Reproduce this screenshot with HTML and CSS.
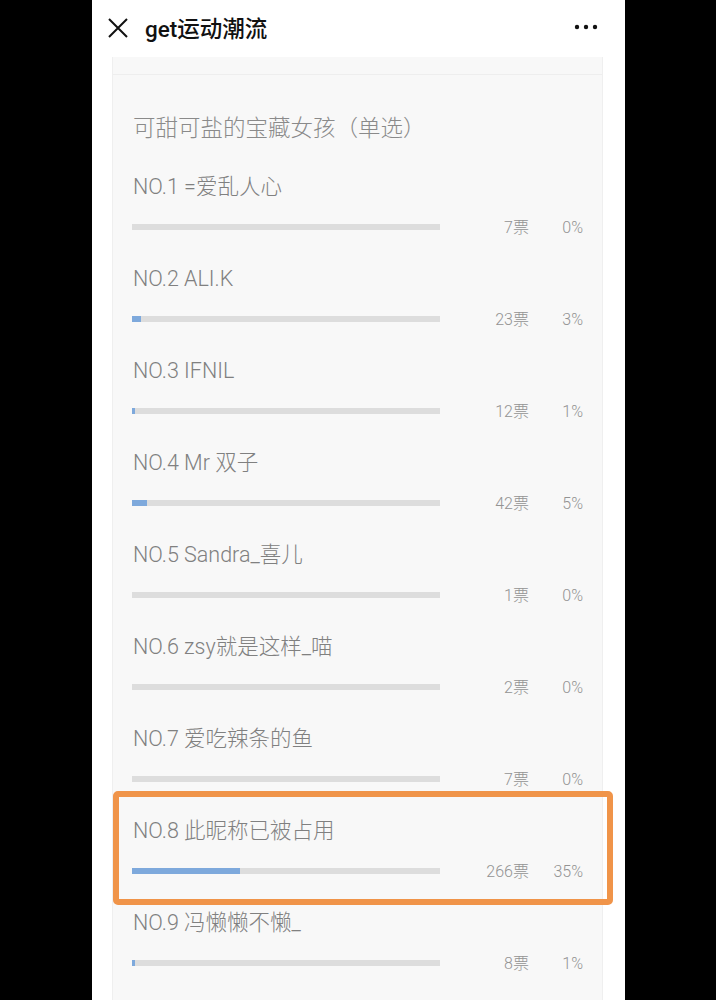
FILE: index.html
```html
<!DOCTYPE html>
<html lang="zh-CN">
<head>
  <meta charset="UTF-8">
  <title>get运动潮流</title>
  <link rel="stylesheet" href="styles.css">
</head>
<body>
  <div class="phone">
    <header class="topbar">
      <svg class="close" width="20" height="20" viewBox="0 0 20 20">
        <path d="M1 1 L19 19 M19 1 L1 19" stroke="#111" stroke-width="2" fill="none"/>
      </svg>
      <h1>get运动潮流</h1>
      <svg class="more" width="24" height="6" viewBox="0 0 24 6">
        <circle cx="3" cy="3" r="2.2" fill="#111"/>
        <circle cx="12" cy="3" r="2.2" fill="#111"/>
        <circle cx="21" cy="3" r="2.2" fill="#111"/>
      </svg>
    </header>

    <div class="card">
      <div class="card-top"></div>
      <section class="vote">
        <h2>可甜可盐的宝藏女孩（单选）</h2>
        <div id="options"></div>
      </section>
    </div>
  </div>

  <script>
    const options = [
      { nom: 'NO.1 =爱乱人心', votes: 7, pct: 0 },
      { nom: 'NO.2 ALI.K', votes: 23, pct: 3 },
      { nom: 'NO.3 IFNIL', votes: 12, pct: 1 },
      { nom: 'NO.4 Mr 双子', votes: 42, pct: 5 },
      { nom: 'NO.5 Sandra_喜儿', votes: 1, pct: 0 },
      { nom: 'NO.6 zsy就是这样_喵', votes: 2, pct: 0 },
      { nom: 'NO.7 爱吃辣条的鱼', votes: 7, pct: 0 },
      { nom: 'NO.8 此昵称已被占用', votes: 266, pct: 35, active: true },
      { nom: 'NO.9 冯懒懒不懒_', votes: 8, pct: 1 }
    ];

    const liste = document.getElementById('options');

    options.forEach(o => {
      const div = document.createElement('div');
      div.className = 'option' + (o.active ? ' highlight' : '');
      div.innerHTML = `
        <div class="label">${o.nom}</div>
        <div class="stats">
          <div class="bar"><div class="fill" style="width: ${o.pct}%"></div></div>
          <span class="votes">${o.votes}票</span>
          <span class="pct">${o.pct}%</span>
        </div>
      `;
      liste.appendChild(div);
    });
  </script>
</body>
</html>
```

FILE: styles.css
```css
html, body {
  margin: 0;
  padding: 0;
  background: #000;
  height: 100%;
  overflow: hidden;
}
body {
  font-family: Roboto, "Noto Sans CJK SC", sans-serif;
}
.phone {
  width: 533px;
  margin-left: 92px;
  height: 1000px;
  background: #fff;
}
.topbar {
  height: 57px;
  display: flex;
  align-items: center;
  padding: 0 27px 0 16px;
  box-sizing: border-box;
}
.close {
  margin-top: -1px;
}
.topbar h1 {
  flex: 1;
  margin: -3px 0 0 17px;
  font-size: 22.5px;
  font-weight: 500;
  color: #111;
}
.more {
  margin-top: -4px;
}
.card {
  margin: 0 22px 0 20px;
  background: #f8f8f8;
  border-left: 1px solid #efefef;
  border-right: 1px solid #efefef;
  height: 943px;
}
.card-top {
  height: 17px;
  border-bottom: 1px solid #eeeeee;
}
.vote {
  padding: 38px 19px 0 19px;
}
.vote h2 {
  margin: 0 0 30px 1px;
  font-size: 22.5px;
  line-height: 30px;
  font-weight: 300;
  color: #8a8a8a;
}
.option {
  position: relative;
  padding-bottom: 28px;
}
.label {
  font-size: 21.5px;
  line-height: 28px;
  font-weight: 300;
  color: #808080;
  margin: 0 0 16px 1px;
}
.stats {
  display: flex;
  align-items: center;
  height: 20px;
  font-size: 16px;
  font-weight: 300;
  color: #939393;
}
.bar {
  width: 308px;
  height: 6px;
  background: #dddddd;
}
.fill {
  height: 100%;
  background: #7ea9dc;
}
.votes {
  flex: 1;
  text-align: right;
  line-height: 20px;
  margin-top: 1px;
}
.pct {
  width: 54px;
  text-align: right;
  line-height: 20px;
  margin-top: 1px;
}
.highlight::after {
  content: "";
  position: absolute;
  top: -26px;
  left: -19px;
  right: -30px;
  bottom: 4px;
  border: 6px solid #f09449;
  border-radius: 5px;
}
```
